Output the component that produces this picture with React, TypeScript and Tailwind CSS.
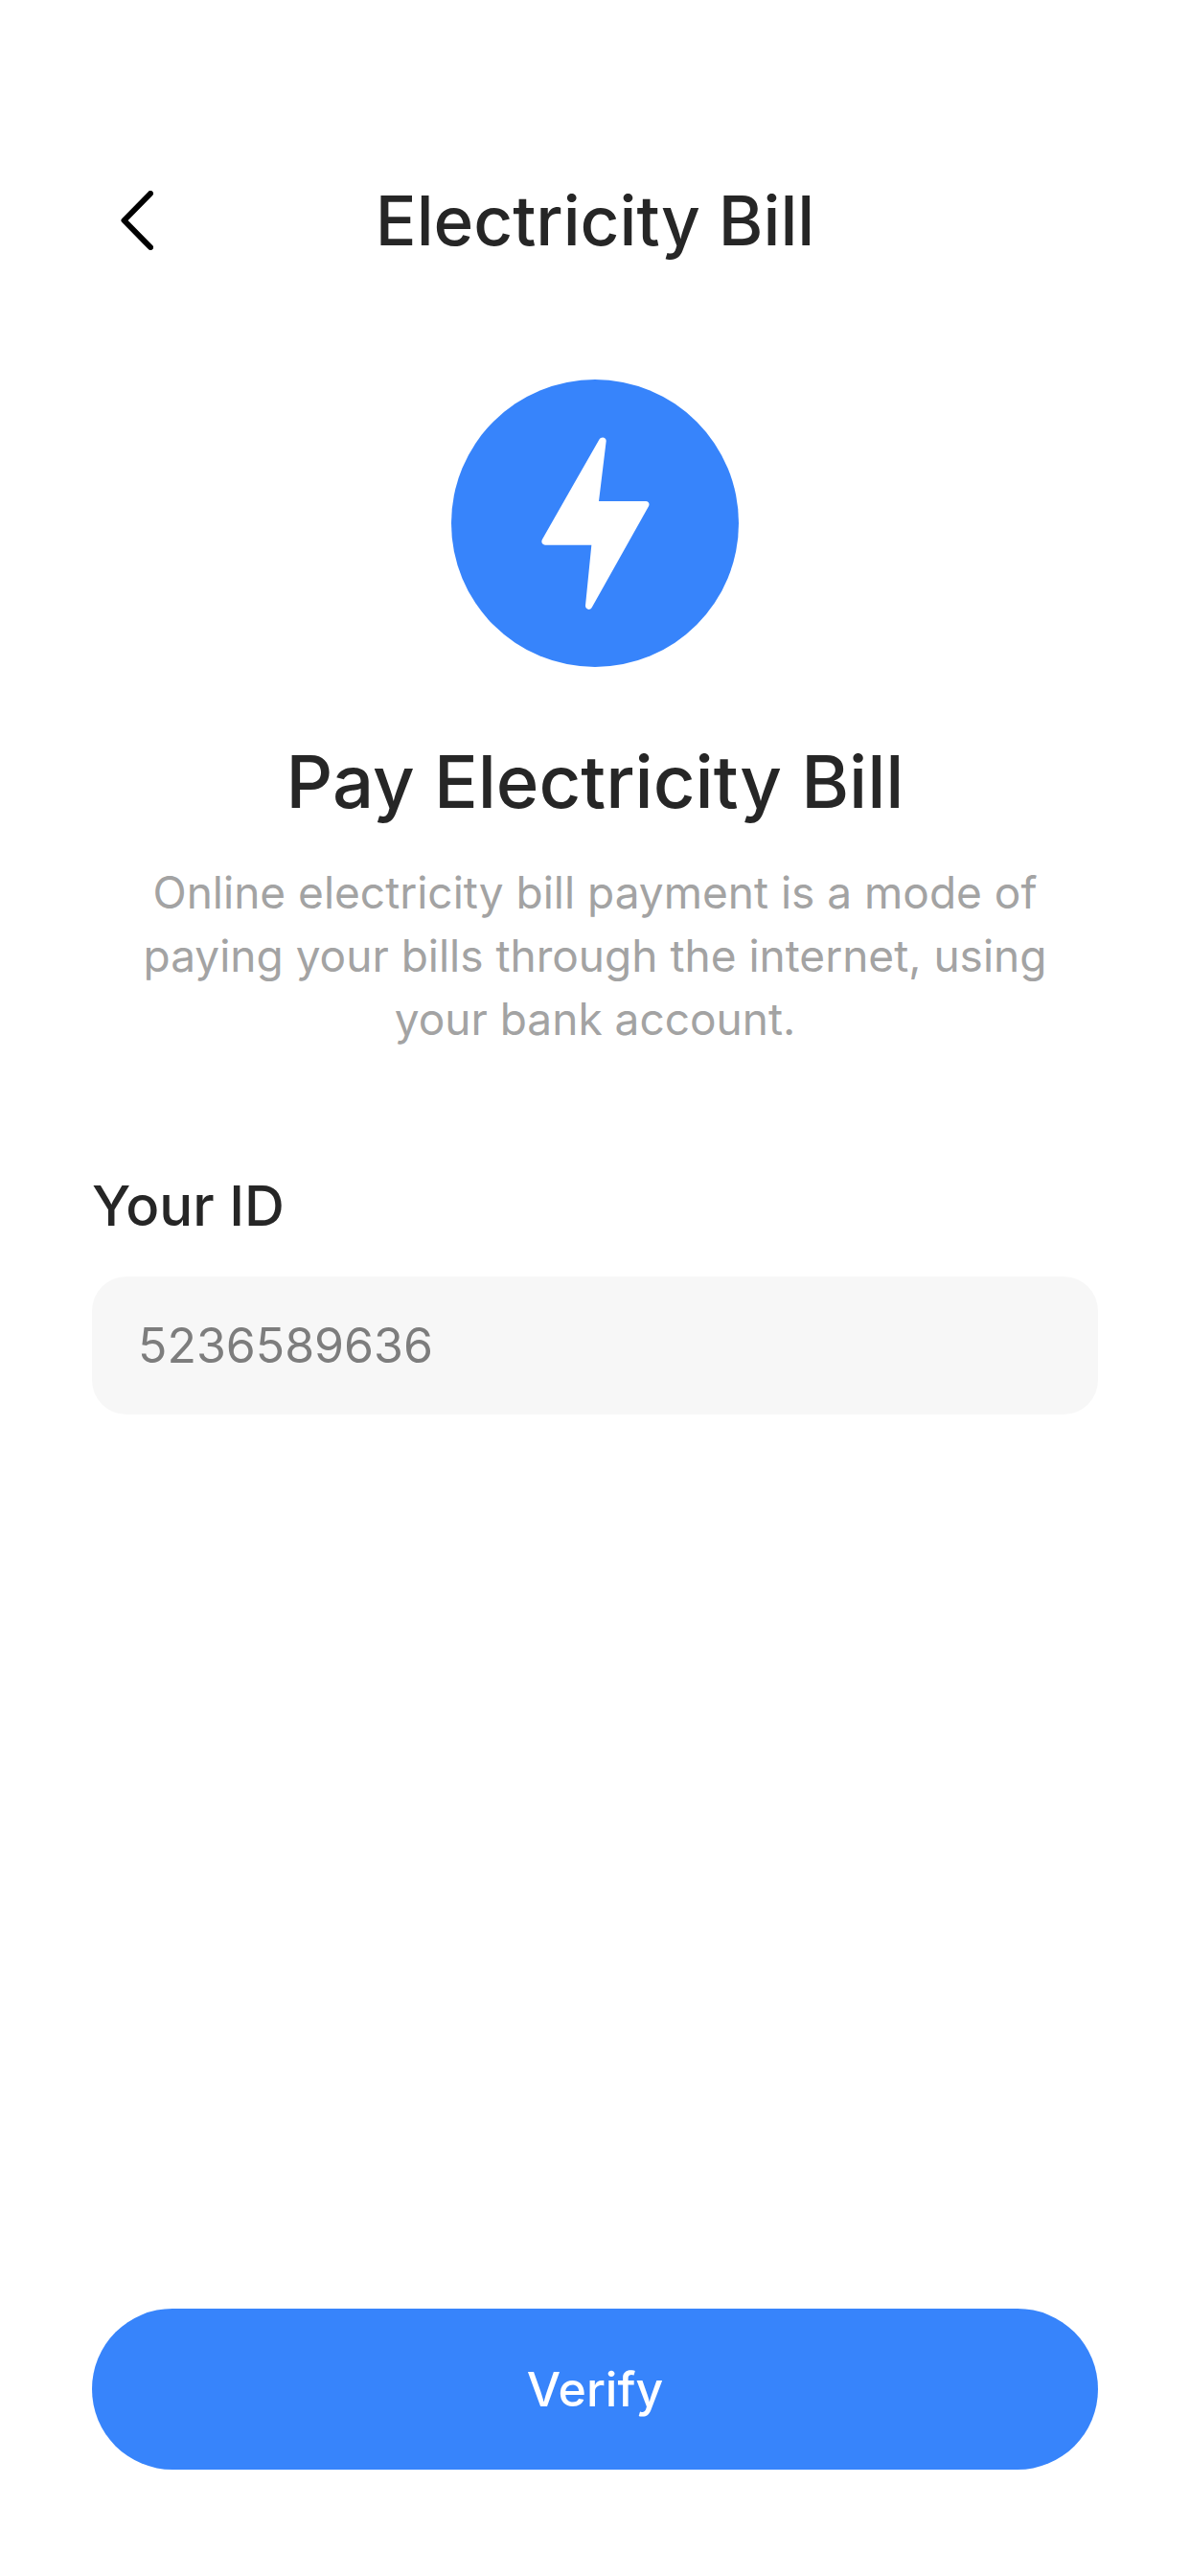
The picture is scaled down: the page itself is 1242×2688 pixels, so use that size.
import React from "react";

function ChevronIcon() {
  return (
    <svg
      viewBox="0 0 34 62"
      className="h-[62px] w-[34px]"
      fill="none"
      stroke="#000000"
      strokeWidth="6"
      strokeLinecap="round"
      strokeLinejoin="round"
      aria-hidden="true"
    >
      <path d="M31 3L3.5 31L31 59" />
    </svg>
  );
}

function BoltIcon() {
  return (
    <svg viewBox="0 0 900 900" className="size-full" fill="#ffffff" aria-hidden="true">
      <path d="M463 188C469 177 486 180 485 193L462 381H609C618 381 622 389 618 397L440 714C434 724 420 720 420 708L439 518H294C285 518 280 509 285 500Z" />
    </svg>
  );
}

export default function App() {
  return (
    <main className="flex min-h-screen flex-col bg-white px-24 pt-[182px] pb-[111px] font-['Inter',sans-serif] text-[#262626]">
      <header className="grid h-24 grid-cols-[96px_1fr_96px] items-center">
        <button type="button" aria-label="Back" className="flex h-24 items-center pl-[30px]">
          <ChevronIcon />
        </button>
        <h1 className="text-center text-[71px] leading-24 font-medium whitespace-nowrap">Electricity Bill</h1>
      </header>

      <section className="mt-[118px] flex flex-col items-center text-center">
        <div className="size-[300px] rounded-full bg-[#3784fb]">
          <BoltIcon />
        </div>
        <h2 className="mt-[71px] text-[76px] leading-24 font-medium">Pay Electricity Bill</h2>
        <p className="mt-[35px] px-10 text-[46px] leading-[66px] text-[#a3a3a3]">
          Online electricity bill payment is a mode of paying your bills through the internet, using your bank
          account.
        </p>
      </section>

      <form id="bill-form" className="mt-[126px] flex flex-col" onSubmit={(e) => e.preventDefault()}>
        <label htmlFor="customer-id" className="text-[58px] leading-[72px] font-medium">
          Your ID
        </label>
        <input
          id="customer-id"
          type="text"
          inputMode="numeric"
          defaultValue="5236589636"
          className="mt-[38px] h-36 w-full rounded-[36px] bg-[#f7f7f7] px-12 text-[50px] text-[#7d7d7d] outline-none"
        />
      </form>

      <button
        type="submit"
        form="bill-form"
        className="mt-auto h-[168px] w-full rounded-full bg-[#3784fb] text-[50px] font-medium text-white"
      >
        Verify
      </button>
    </main>
  );
}
